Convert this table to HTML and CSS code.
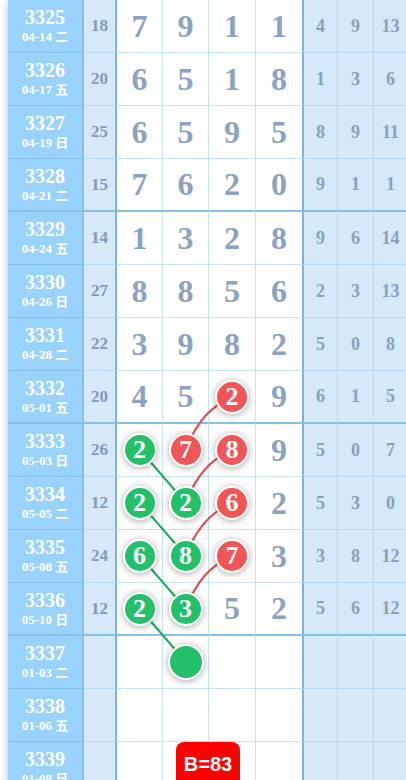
FILE: index.html
```html
<!DOCTYPE html>
<html lang="zh">
<head>
  <meta charset="UTF-8" />
  <title>走势图</title>
  <link rel="stylesheet" href="styles.css">
</head>
<body>

  <div class="board">

    <div class="row">
      <div class="cell issue"><b>3325</b><small>04-14 二</small></div>
      <div class="cell sum">18</div>
      <div class="cell num">7</div><div class="cell num">9</div><div class="cell num c5">1</div><div class="cell num c6">1</div>
      <div class="cell dist">4</div><div class="cell dist d8">9</div><div class="cell dist">13</div>
    </div>
    <div class="row">
      <div class="cell issue"><b>3326</b><small>04-17 五</small></div>
      <div class="cell sum">20</div>
      <div class="cell num">6</div><div class="cell num">5</div><div class="cell num c5">1</div><div class="cell num c6">8</div>
      <div class="cell dist">1</div><div class="cell dist d8">3</div><div class="cell dist">6</div>
    </div>
    <div class="row">
      <div class="cell issue"><b>3327</b><small>04-19 日</small></div>
      <div class="cell sum">25</div>
      <div class="cell num">6</div><div class="cell num">5</div><div class="cell num c5">9</div><div class="cell num c6">5</div>
      <div class="cell dist">8</div><div class="cell dist d8">9</div><div class="cell dist">11</div>
    </div>
    <div class="row end">
      <div class="cell issue"><b>3328</b><small>04-21 二</small></div>
      <div class="cell sum">15</div>
      <div class="cell num">7</div><div class="cell num">6</div><div class="cell num c5">2</div><div class="cell num c6">0</div>
      <div class="cell dist">9</div><div class="cell dist d8">1</div><div class="cell dist">1</div>
    </div>

    <div class="row">
      <div class="cell issue"><b>3329</b><small>04-24 五</small></div>
      <div class="cell sum">14</div>
      <div class="cell num">1</div><div class="cell num">3</div><div class="cell num c5">2</div><div class="cell num c6">8</div>
      <div class="cell dist">9</div><div class="cell dist d8">6</div><div class="cell dist">14</div>
    </div>
    <div class="row">
      <div class="cell issue"><b>3330</b><small>04-26 日</small></div>
      <div class="cell sum">27</div>
      <div class="cell num">8</div><div class="cell num">8</div><div class="cell num c5">5</div><div class="cell num c6">6</div>
      <div class="cell dist">2</div><div class="cell dist d8">3</div><div class="cell dist">13</div>
    </div>
    <div class="row">
      <div class="cell issue"><b>3331</b><small>04-28 二</small></div>
      <div class="cell sum">22</div>
      <div class="cell num">3</div><div class="cell num">9</div><div class="cell num c5">8</div><div class="cell num c6">2</div>
      <div class="cell dist">5</div><div class="cell dist d8">0</div><div class="cell dist">8</div>
    </div>
    <div class="row end">
      <div class="cell issue"><b>3332</b><small>05-01 五</small></div>
      <div class="cell sum">20</div>
      <div class="cell num">4</div><div class="cell num">5</div><div class="cell num c5"><span class="ball red">2</span></div><div class="cell num c6">9</div>
      <div class="cell dist">6</div><div class="cell dist d8">1</div><div class="cell dist">5</div>
    </div>

    <div class="row">
      <div class="cell issue"><b>3333</b><small>05-03 日</small></div>
      <div class="cell sum">26</div>
      <div class="cell num"><span class="ball green">2</span></div><div class="cell num"><span class="ball red">7</span></div><div class="cell num c5"><span class="ball red">8</span></div><div class="cell num c6">9</div>
      <div class="cell dist">5</div><div class="cell dist d8">0</div><div class="cell dist">7</div>
    </div>
    <div class="row">
      <div class="cell issue"><b>3334</b><small>05-05 二</small></div>
      <div class="cell sum">12</div>
      <div class="cell num"><span class="ball green">2</span></div><div class="cell num"><span class="ball green">2</span></div><div class="cell num c5"><span class="ball red">6</span></div><div class="cell num c6">2</div>
      <div class="cell dist">5</div><div class="cell dist d8">3</div><div class="cell dist">0</div>
    </div>
    <div class="row">
      <div class="cell issue"><b>3335</b><small>05-08 五</small></div>
      <div class="cell sum">24</div>
      <div class="cell num"><span class="ball green">6</span></div><div class="cell num"><span class="ball green">8</span></div><div class="cell num c5"><span class="ball red">7</span></div><div class="cell num c6">3</div>
      <div class="cell dist">3</div><div class="cell dist d8">8</div><div class="cell dist">12</div>
    </div>
    <div class="row end">
      <div class="cell issue"><b>3336</b><small>05-10 日</small></div>
      <div class="cell sum">12</div>
      <div class="cell num"><span class="ball green">2</span></div><div class="cell num"><span class="ball green">3</span></div><div class="cell num c5">5</div><div class="cell num c6">2</div>
      <div class="cell dist">5</div><div class="cell dist d8">6</div><div class="cell dist">12</div>
    </div>

    <div class="row">
      <div class="cell issue"><b>3337</b><small>01-03 二</small></div>
      <div class="cell sum"></div>
      <div class="cell num"></div><div class="cell num"><span class="ball green big"></span></div><div class="cell num c5"></div><div class="cell num c6"></div>
      <div class="cell dist"></div><div class="cell dist d8"></div><div class="cell dist"></div>
    </div>
    <div class="row">
      <div class="cell issue"><b>3338</b><small>01-06 五</small></div>
      <div class="cell sum"></div>
      <div class="cell num"></div><div class="cell num"></div><div class="cell num c5"></div><div class="cell num c6"></div>
      <div class="cell dist"></div><div class="cell dist d8"></div><div class="cell dist"></div>
    </div>
    <div class="row">
      <div class="cell issue"><b>3339</b><small>01-08 日</small></div>
      <div class="cell sum"></div>
      <div class="cell num"></div><div class="cell num"></div><div class="cell num c5"></div><div class="cell num c6"></div>
      <div class="cell dist"></div><div class="cell dist d8"></div><div class="cell dist"></div>
    </div>

    <!-- trend lines, drawn under the balls -->
    <svg class="lines" width="398" height="800" viewBox="0 0 398 800">
      <g stroke="#1fa95e" stroke-width="2" fill="none">
        <line x1="132" y1="450" x2="178" y2="503" />
        <line x1="132" y1="503" x2="178" y2="556" />
        <line x1="132" y1="556" x2="178" y2="609" />
        <line x1="132" y1="609" x2="178" y2="662" />
      </g>
      <g stroke="#e24a4a" stroke-width="2" fill="none">
        <path d="M224.5 397 Q192 410 178 450" />
        <path d="M224.5 450 Q192 463 178 503" />
        <path d="M224.5 503 Q192 516 178 556" />
        <path d="M224.5 556 Q192 569 178 609" />
      </g>
    </svg>

    <div class="badge">B=83</div>
  </div>

</body>
</html>
```

FILE: styles.css
```css
body {
  margin: 0;
  padding-left: 8px;
  background: #fff;
  font-family: "Liberation Serif", "Noto Sans CJK SC", serif;
  overflow: hidden;
}
.board {
  position: relative;
  width: 410px;
  box-shadow: 0 0 8px rgba(0, 0, 0, 0.25);
}
.row {
  display: flex;
  height: 53px;
}
.cell {
  box-sizing: border-box;
  height: 53px;
  display: flex;
  align-items: center;
  justify-content: center;
  font-weight: bold;
  border-right: 1px solid #c6e3f3;
  border-bottom: 1px solid #c6e3f3;
  flex-shrink: 0;
}
.row.end .cell {
  border-bottom: 2px solid #86c1e3;
}
.issue {
  width: 76px;
  flex-direction: column;
  background: #99d3fc;
  color: #fff;
  border-right: 2px solid #86c3ec;
  border-bottom-color: #86c3ec;
}
.issue b {
  font-size: 20px;
  line-height: 21px;
}
.issue small {
  font-size: 13px;
  line-height: 17px;
  font-weight: bold;
}
.sum {
  width: 33px;
  background: #d5e9f9;
  color: #8199ba;
  font-size: 17px;
  border-right: 2px solid #7db5d9;
  border-bottom-color: #b7dbf0;
}
.num {
  width: 46px;
  background: #fff;
  color: #8ca2c1;
  font-size: 32px;
}
.num.c5 {
  width: 47px;
}
.num.c6 {
  width: 48px;
  border-right: 2px solid #7db5d9;
}
.dist {
  width: 34px;
  background: #d5e9f9;
  color: #8aa0bf;
  font-size: 18px;
  border-right-color: #b6daf0;
  border-bottom-color: #b6daf0;
}
.dist.d8 {
  width: 36px;
}
.ball {
  position: relative;
  z-index: 2;
  box-sizing: border-box;
  width: 34px;
  height: 34px;
  border: 2px solid #fff;
  border-radius: 50%;
  display: flex;
  align-items: center;
  justify-content: center;
  color: #fff;
  font-size: 26px;
  box-shadow: 0 1px 7px rgba(0, 0, 0, 0.35);
}
.ball.green {
  background: #22c068;
}
.ball.red {
  background: #f25556;
}
.ball.big {
  width: 36px;
  height: 36px;
}
.lines {
  position: absolute;
  left: 0;
  top: 0;
  z-index: 1;
}
.badge {
  position: absolute;
  left: 168px;
  top: 742px;
  z-index: 3;
  width: 64px;
  height: 50px;
  box-sizing: border-box;
  padding-top: 11px;
  border-radius: 8px;
  background: #ff0000;
  color: #fff;
  font-family: "Liberation Sans", Arial, sans-serif;
  font-weight: bold;
  font-size: 20px;
  text-align: center;
}
```
